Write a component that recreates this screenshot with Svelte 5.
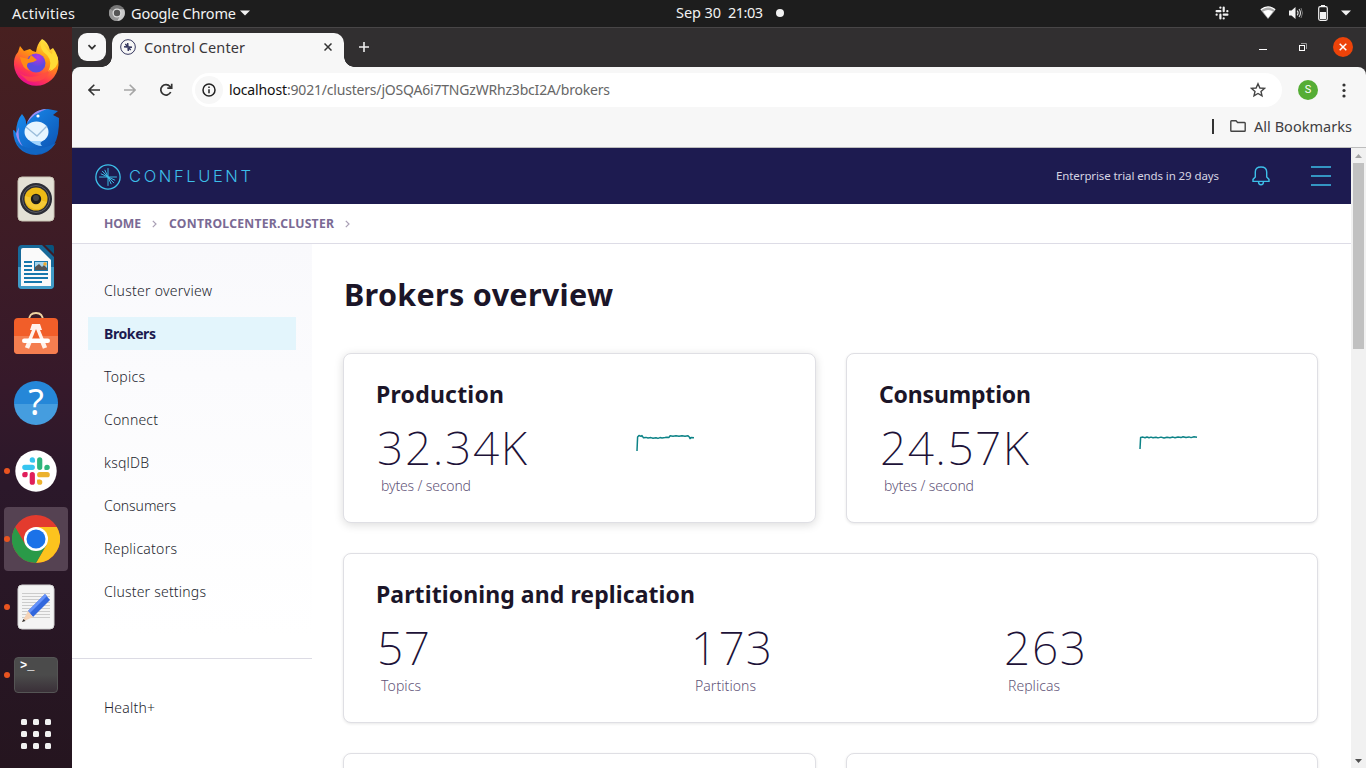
<script>
  // Spreads the letters so that a label takes its designed width.
  function fit(node, width) {
    const n = node.textContent.length;
    const natural = node.getBoundingClientRect().width;
    const gap = n > 1 ? (width - natural) / (n - 1) : 0;
    node.style.letterSpacing = `${gap}px`;
    node.style.marginRight = `${-gap}px`;
  }

  const nav = [
    ['Cluster overview', 108], ['Brokers', 52], ['Topics', 41], ['Connect', 54],
    ['ksqlDB', 45], ['Consumers', 72], ['Replicators', 73], ['Cluster settings', 102]
  ];
  const rates = [
    { title: 'Production', tw: 128, value: '32.34K', vw: 150,
      line: 'M1 17L1.6 3L3 1.5L5 2.4L6 1.6L7.5 3.8L10 3.4L12 4L15 3.6L17 4.3L20 3.7L22 4.4L24 3.6L26 4L29 3.6L31 3.2L33 3.4L34 1.8L37 2.2L40 1.7L43 2.3L46 1.7L49 2.2L52 1.7L53.5 3.2L54 4.6L55 3.6L58 3.8' },
    { title: 'Consumption', tw: 152, value: '24.57K', vw: 149,
      line: 'M1 15L1.6 3.6L4 3.1L6 3.8L8 3L10 3.7L12 3.1L14 3.8L17 3.2L19 3.9L22 3.1L25 4L28 3.2L31 3.8L34 3.1L36 3.7L39 3L42 3.6L44 2.8L47 3.5L50 2.9L52 3.6L55 2.8L58 3.3' }
  ];
  const counts = [['57', 53, 'Topics', 40], ['173', 81, 'Partitions', 61], ['263', 82, 'Replicas', 52]];
  const dots = [0, 12, 24];
  const rays = [
    'M12 12H3.8M12 12L5.4 9M12 12L6.5 6.4M12 12L9 5.4M12 12V3.8',
    'M12 12H20.2M12 12L18.6 15M12 12L17.5 17.6M12 12L15 18.6M12 12V20.2'
  ];
</script>

<div class="desktop">
  <header class="topbar">
    <span class="activities"><span use:fit={63}>Activities</span></span>
    <svg class="mini" width="16" height="16" viewBox="0 0 16 16"><circle cx="8" cy="8" r="8" fill="#777"/><path d="M8 4.3H15A8 8 0 0 1 8 16L11.3 10Z" fill="#c9c9c9"/><path d="M1 4A8 8 0 0 0 8 16L11 10Z" fill="#969696"/><circle cx="8" cy="8" r="4.5" fill="#ddd"/><circle cx="8" cy="8" r="3.2" fill="#555"/></svg>
    <span class="app"><span use:fit={105}>Google Chrome</span></span>
    <svg class="caret" width="10" height="6"><path d="M0 0.5H10L5 5.5Z" fill="#f2f2f2"/></svg>
    <span class="clock"><span use:fit={45}>Sep 30</span><span use:fit={35}>21:03</span><i></i></span>
    <span class="tray">
      <svg width="14" height="14" viewBox="0 0 14 14" stroke="#f2f2f2" stroke-width="2.200" stroke-linecap="round"><path d="M5.400 1.600V1.700M1.600 5.200H5.400M8.700 1.600V5.200M12.400 5.200H12.300M8.700 8.700H12.400M8.700 12.400V12.300M5.400 8.700V12.400M1.600 8.700H1.700"/></svg>
      <svg width="16" height="14" viewBox="0 0 16 14"><path d="M.8 4.2Q8 -2 15.2 4.2L8 13Z" fill="#aaa"/><path d="M3 5.6Q8 2.5 13 5.6L8 12Z" fill="#fff"/><path d="M.8 3.8Q8 -2 15.2 3.8" fill="none" stroke="#fff" stroke-width="1.4"/></svg>
      <svg width="16" height="14" viewBox="0 0 16 14"><path d="M1 4.5H3.5L7.5 1V13L3.5 9.5H1Z" fill="#f2f2f2"/><path d="M9.2 4.7Q11 7 9.2 9.3M11 3Q14 7 11 11" fill="none" stroke="#ddd" stroke-width="1.1"/><path d="M13 2Q16 7 13 12" fill="none" stroke="#777"/></svg>
      <svg width="10" height="16" viewBox="0 0 10 16"><path d="M3 0H7V2H3Z" fill="#f2f2f2"/><rect x=".7" y="1.7" width="8.6" height="13.6" rx="1.5" fill="none" stroke="#f2f2f2" stroke-width="1.2"/><path d="M2 7H8V14H2Z" fill="#f2f2f2"/></svg>
      <svg width="10" height="6"><path d="M0 .5H10L5 5.5Z" fill="#f2f2f2"/></svg>
    </span>
  </header>

  <div class="body">
    <nav class="dock">
      <div class="slot low">
        <svg width="48" height="52" viewBox="0 0 48 52">
          <defs>
            <linearGradient id="fx" x1=".8" y1="0" x2=".3" y2="1"><stop offset="0" stop-color="#fff44f"/><stop offset=".4" stop-color="#ff980e"/><stop offset=".75" stop-color="#ff3750"/><stop offset="1" stop-color="#e60895"/></linearGradient>
            <radialGradient id="fg" cx=".6" cy=".2"><stop offset="0" stop-color="#b833e1"/><stop offset="1" stop-color="#5b4be0"/></radialGradient>
          </defs>
          <path d="M30 1Q36 4 38 12L41 10Q47 18 46.500 27A22.300 22.300 0 0 1 2 27Q1.500 19 6 14L8 8L12 13L18 11Q21 14 24 14Q25 6 30 1Z" fill="url(#fx)"/>
          <path d="M29 2Q27 12 35 17Q41 24 36 34Q47 30 46 20Q43 14 41 11L40 16Q35 13 29 2Z" fill="#ffdb35"/>
          <circle cx="24" cy="25" r="9.500" fill="url(#fg)"/>
          <path d="M8 19L17 21L19 17L25 22Q21 25 16 25Q13 29 18 33Q10 31 8 19Z" fill="#ff8b16"/>
          <path d="M6 34Q20 45 39 31Q32 47 16 43Z" fill="#ff4d43" opacity=".7"/>
        </svg>
      </div>
      <div class="slot low">
        <svg width="50" height="48" viewBox="0 0 50 48">
          <defs><linearGradient id="tb" x1="0" y1="0" x2="1" y2="1"><stop offset="0" stop-color="#1b91f3"/><stop offset="1" stop-color="#0b4fae"/></linearGradient></defs>
          <path d="M11 6Q16 12 15 17Q21 1 37 1Q42 2 47 3L42 7L48 10Q49 46 25 47Q3 46 2 22Q4 22 5 25Q5 13 11 6Z" fill="url(#tb)"/>
          <path d="M8 19Q6 30 12 39Q6 33 5 26ZM16 15Q22 1 36 1Q23 5 16 15Z" fill="#9d8cf0"/>
          <path d="M5 34Q20 47 45 35Q37 47 23 46Q11 44 5 34Z" fill="#1166c4"/>
          <ellipse cx="25.500" cy="24" rx="12" ry="10.500" fill="#e7f5ff"/><path d="M19 33Q25 38 31 38Q28 35 31 33Z" fill="#9fd4ff"/>
          <path d="M15 19L26 28L36 18" fill="none" stroke="#9bbddb" stroke-width="1.300"/><circle cx="27" cy="8" r="1.600" fill="#fff"/>
        </svg>
      </div>
      <div class="slot">
        <svg width="38" height="46" viewBox="0 0 38 46"><rect x="1" y="1" width="36" height="44" rx="4" fill="#e4e1d6" stroke="#c9c4b5"/><circle cx="19" cy="23" r="16" fill="#2b2c35"/><circle cx="19" cy="23" r="13.500" fill="none" stroke="#5d5e66"/><circle cx="19" cy="23" r="11.500" fill="#edba16"/><path d="M8 20A11.500 11.500 0 0 0 30 26L19 23Z" fill="#f9d34d" opacity=".6"/><circle cx="19" cy="23" r="5.200" fill="#1c1c1c"/><circle cx="19" cy="22" r="3" fill="#444"/></svg>
      </div>
      <div class="slot">
        <svg width="38" height="46" viewBox="0 0 38 46"><path d="M5 1H25L37 13V41Q37 45 33 45H5Q1 45 1 41V5Q1 1 5 1Z" fill="#176999"/><path d="M1 23H37V41Q37 45 33 45H5Q1 45 1 41Z" fill="#409bc7"/><path d="M6 4H22L34 16V42H4V6Q4 4 6 4Z" fill="#fafafa"/><path d="M28 1H35Q37 1 37 4V10Z" fill="#08547e"/><path d="M7 18H15M7 22H15M7 26H15M7 30H31M7 34H31M7 38H25" stroke="#1678ad" stroke-width="2"/><rect x="17" y="17" width="14" height="10" fill="#1678ad"/><path d="M18 18H30V26H18Z" fill="#a5d5ed"/><path d="M18 26V23L22 20L25 23L27 21L30 24V26Z" fill="#555"/><circle cx="28" cy="20" r="1.700" fill="#efa92b"/></svg>
      </div>
      <div class="slot store">
        <svg width="46" height="48" viewBox="0 0 46 48"><path d="M16 12Q16 4 23 4Q30 4 30 12" fill="none" stroke="#efd4a2" stroke-width="1.800"/><rect x="1" y="9" width="44" height="36" rx="4" fill="#f15e29"/><path d="M1 27H45V41Q45 45 41 45H5Q1 45 1 41Z" fill="#f47e50"/><path d="M23 17L14 39M23 17L32 39" stroke="#fff2ec" stroke-width="4.500"/><path d="M19 15H27L29 21H17Z" fill="#fff2ec"/><path d="M23 20L19 30H27Z" fill="#f15e29"/><rect x="9" y="29.500" width="28" height="4.500" rx="2.200" fill="#fff"/></svg>
      </div>
      <div class="slot"><div class="help">?</div></div>
      <div class="slot run">
        <svg width="42" height="42" viewBox="0 0 42 42"><circle cx="21" cy="21" r="20.700" fill="#fff"/><g stroke-width="5.200" stroke-linecap="round"><path d="M17.300 9.800V10M9.800 17.300H17.300" stroke="#36c5f0"/><path d="M24.700 9.800V17.300M32.200 17.300H32" stroke="#2eb67d"/><path d="M24.700 24.700H32.200M24.700 32.200V32" stroke="#ecb22e"/><path d="M17.300 24.700V32.200M9.800 24.700H10" stroke="#e01e5a"/></g><path d="M17.300 9.800H19.900V12.400H17.300Z" fill="#36c5f0"/><path d="M29.600 17.300H32.200V19.900H29.600Z" fill="#2eb67d"/><path d="M22.100 29.600H24.700V32.200H22.100Z" fill="#ecb22e"/><path d="M9.800 22.100H12.400V24.700H9.800Z" fill="#e01e5a"/></svg>
      </div>
      <div class="slot run current">
        <svg width="48" height="48" viewBox="0 0 48 48"><circle cx="24" cy="24" r="24" fill="#e33b2e"/><path d="M24 12H44.800A24 24 0 0 1 24 48L34.400 30Z" fill="#fcc31e"/><path d="M3.200 12A24 24 0 0 0 24 48L34.400 30L24 36L13.600 30Z" fill="#2a9a48"/><circle cx="24" cy="24" r="12" fill="#fff"/><circle cx="24" cy="24" r="9.500" fill="#1b72e8"/></svg>
      </div>
      <div class="slot run">
        <svg width="38" height="46" viewBox="0 0 38 46"><rect x="1" y="1" width="36" height="44" rx="4" fill="#f4f4f4" stroke="#d4d4d4"/><path d="M5 9.500H33M5 12.500H33M5 15.500H33M5 18.500H33M5 21.500H33M5 24.500H33M5 27.500H33M5 30.500H33M5 33.500H33" stroke="#ccc"/><path d="M28 10L33 16L16 33L11 27Z" fill="#3267dd"/><path d="M28 10L30 12L13 29L11 27Z" fill="#6592fa"/><path d="M11 27L16 33L5 38Z" fill="#f4d3b7"/><path d="M6.500 35L8.500 37L5 38Z" fill="#333"/></svg>
      </div>
      <div class="slot run"><div class="term">&gt;_</div></div>
      <div class="slot apps">
        <svg width="30" height="30">{#each dots as y}{#each dots as x}<rect {x} {y} width="6" height="6" rx="1.500" fill="#f1f1f1"/>{/each}{/each}</svg>
      </div>
    </nav>

    <section class="window">
      <div class="tabs">
        <button class="tabsearch" aria-label="Search tabs"><svg width="10" height="7"><path d="M1.500 1.200L5 4.700L8.500 1.200" fill="none" stroke="#333" stroke-width="1.700"/></svg></button>
        <div class="tab">
          <svg width="16" height="16" viewBox="0 0 24 24" fill="none" stroke="#35375f"><circle cx="12" cy="12" r="11" stroke-width="1.500"/><path d="M6 11.500L12 12L8 7.500M12 12L11.500 6M18 12.500L12 12L16 16.500M12 12L12.500 18" stroke-width="2.200"/></svg>
          <span class="tabtitle"><span use:fit={101}>Control Center</span></span>
          <svg class="x" width="8" height="8"><path d="M.5 .5L7.500 7.500M7.500 .5L.5 7.500" stroke="#333" stroke-width="1.500"/></svg>
        </div>
        <svg class="plus" width="10" height="10"><path d="M5 0V10M0 5H10" stroke="#eee" stroke-width="1.600"/></svg>
        <div class="controls">
          <svg width="8" height="10"><path d="M0 7.500H8" stroke="#fff"/></svg>
          <svg width="8" height="8"><path d="M2 .5H7.500V6" fill="none" stroke="#999"/><rect x=".5" y="2.500" width="5" height="5" fill="none" stroke="#fff"/></svg>
          <i class="close"><svg width="8" height="8"><path d="M.7 .7L7.300 7.300M7.300 .7L.7 7.300" stroke="#fff" stroke-width="1.500"/></svg></i>
        </div>
      </div>

      <div class="toolbar">
        <svg width="12" height="12" fill="none" stroke="#333" stroke-width="1.600"><path d="M12 6H1M6.300 .7L1 6L6.300 11.300"/></svg>
        <svg width="12" height="12" fill="none" stroke="#a6a6a6" stroke-width="1.600"><path d="M0 6H11M5.700 .7L11 6L5.700 11.300"/></svg>
        <svg width="14" height="14" fill="none" stroke="#333" stroke-width="1.700"><path d="M11.700 9A5.200 5.200 0 1 1 11 3.500L12.500 5M12.700 .8V5.200H8.300"/></svg>
        <div class="omnibox">
          <i class="info"><svg width="14" height="14" fill="none" stroke="#222" stroke-width="1.500"><circle cx="7" cy="7" r="6"/><path d="M7 6.300V10.300M7 3.600V5.100"/></svg></i>
          <span class="url"><b use:fit={58}>localhost</b><span use:fit={323}>:9021/clusters/jOSQA6i7TNGzWRhz3bcI2A/brokers</span></span>
          <svg width="16" height="16"><path d="M8 1.800L9.900 6L14.400 6.400L11 9.400L12 13.900L8 11.500L4 13.900L5 9.400L1.600 6.400L6.100 6Z" fill="none" stroke="#444" stroke-width="1.400"/></svg>
        </div>
        <i class="avatar">S</i>
        <svg class="kebab" width="4" height="15" fill="#333"><circle cx="2" cy="2" r="1.600"/><circle cx="2" cy="7.500" r="1.600"/><circle cx="2" cy="13" r="1.600"/></svg>
      </div>
      <div class="bookmarks">
        <i></i>
        <svg width="16" height="12"><path d="M.8 1.500Q.8 .7 1.500 .7H6L7.600 2.500H14.500Q15.200 2.500 15.200 3.300V10.500Q15.200 11.300 14.500 11.300H1.500Q.8 11.300 .8 10.500Z" fill="none" stroke="#444" stroke-width="1.400"/></svg>
        <span use:fit={98}>All Bookmarks</span>
      </div>

      <div class="viewport">
        <div class="page">
          <div class="brandbar">
            <svg width="26" height="26" viewBox="0 0 24 24" fill="none" stroke="#3dbfe9"><circle cx="12" cy="12" r="11.200" stroke-width="1.200"/>{#each rays as d}<path {d} stroke-width=".9"/>{/each}</svg>
            <span class="wordmark"><span use:fit={122}>CONFLUENT</span></span>
            <span class="trial"><span use:fit={163}>Enterprise trial ends in 29 days</span></span>
            <svg class="bell" width="18" height="20" fill="none" stroke="#3dbfe9" stroke-width="1.400"><path d="M1 15.400V13.400L3.300 11V6Q3.300 1 9 1Q14.700 1 14.700 6V11L17 13.400V15.400ZM6.500 15.500Q6.500 18.800 9 18.800Q11.500 18.800 11.500 15.500"/></svg>
            <svg class="menu" width="20" height="20" stroke="#3dbfe9" stroke-width="1.300"><path d="M0 1H20M0 10H20M0 19H20"/></svg>
          </div>
          <div class="crumbs">
            <span use:fit={37}>HOME</span>
            <svg width="5" height="8"><path d="M.8 .8L4 4L.8 7.200" fill="none" stroke="#a99fb5" stroke-width="1.200"/></svg>
            <span use:fit={165}>CONTROLCENTER.CLUSTER</span>
            <svg width="5" height="8"><path d="M.8 .8L4 4L.8 7.200" fill="none" stroke="#a99fb5" stroke-width="1.200"/></svg>
          </div>
          <div class="columns">
            <aside>
              <ul>
                {#each nav as [label, width]}
                  <li class:active={label === 'Brokers'}><span use:fit={width}>{label}</span></li>
                {/each}
              </ul>
              <div class="health"><span use:fit={51}>Health+</span></div>
            </aside>
            <main>
              <h1><span use:fit={269}>Brokers overview</span></h1>
              <div class="grid">
                {#each rates as r, i}
                  <article class:raised={i === 0}>
                    <h2><span use:fit={r.tw}>{r.title}</span></h2>
                    <div class="rate">
                      <div>
                        <div class="value"><span use:fit={r.vw}>{r.value}</span></div>
                        <div class="unit"><span use:fit={90}>bytes / second</span></div>
                      </div>
                      <svg width="60" height="20"><path d={r.line} fill="none" stroke="#0d8387" stroke-width="1.500" stroke-linejoin="round"/></svg>
                    </div>
                  </article>
                {/each}
                <article class="wide">
                  <h2><span use:fit={319}>Partitioning and replication</span></h2>
                  <div class="counts">
                    {#each counts as [value, vw, label, lw]}
                      <div>
                        <div class="value"><span use:fit={vw}>{value}</span></div>
                        <div class="unit"><span use:fit={lw}>{label}</span></div>
                      </div>
                    {/each}
                  </div>
                </article>
                <article></article>
                <article></article>
              </div>
            </main>
          </div>
        </div>
        <div class="scroll"><svg width="15" height="15"><path d="M4 10L7.500 6L11 10Z" fill="#a3a3a3"/></svg><i></i><svg class="down" width="15" height="15"><path d="M4 6L7.500 10L11 6Z" fill="#505050"/></svg></div>
      </div>
    </section>
  </div>
</div>

<style>
  :global(body) { margin: 0; overflow: hidden; }
  * { box-sizing: border-box; }
  svg { display: block; flex: none; }
  span { white-space: nowrap; }
  i { font-style: normal; }
  span > span, h1 > span, h2 > span, b, .crumbs span, li span, .value span, .unit span, .health span { display: inline-block; }
  .desktop { width: 1366px; height: 768px; display: flex; flex-direction: column; overflow: hidden; font: 14.500px/20px "Noto Sans", "Open Sans", sans-serif; color: #231e2d; }
  .topbar { height: 27px; flex: none; background: #1d1d1d; color: #f2f2f2; display: flex; align-items: center; padding: 0 15px 1px 12px; position: relative; }
  .activities { width: 97px; }
  .app { width: 109px; margin-left: 6px; }
  .clock { position: absolute; left: 676px; top: 2px; display: flex; gap: 7px; align-items: center; }
  .clock i { width: 8px; height: 8px; border-radius: 50%; background: #f2f2f2; margin: 2px 0 0 6px; }
  .tray { margin-left: auto; display: flex; align-items: center; }
  .tray svg:nth-child(2) { margin-left: 31px; }
  .tray svg:nth-child(3) { margin-left: 12px; }
  .tray svg:nth-child(4) { margin-left: 14px; }
  .tray svg:nth-child(5) { margin-left: 13px; }
  .body { flex: 1; display: flex; min-height: 0; }
  .dock { width: 72px; background: linear-gradient(#482020, #36192a 48%, #2b182a 62%, #25151f); display: flex; flex-direction: column; gap: 4px; padding: 4px 4px 0; }
  .slot { height: 64px; flex: none; display: flex; align-items: center; justify-content: center; border-radius: 4px; position: relative; }
  .low { padding-top: 2px; }
  .store { padding-bottom: 5px; }
  .run::before { content: ""; position: absolute; left: 0; width: 6px; height: 6px; border-radius: 50%; background: #e95420; }
  .current { background: #554252; }
  .apps { margin-top: -9px; }
  .help { width: 44px; height: 44px; border-radius: 50%; background: linear-gradient(#2587d8 52%, #459ddf 52%); color: #fff; font: 36px/42px "Noto Sans", sans-serif; text-align: center; }
  .term { width: 44px; height: 36px; border-radius: 4px; background: linear-gradient(#4b4b4b 50%, #3a3038); border: 1px solid #555; color: #fff; font: bold 12px/16px "Liberation Mono", monospace; padding-left: 5px; }
  .window { flex: 1; min-width: 0; display: flex; flex-direction: column; background: #f7f7f7; }
  .tabs { height: 40px; flex: none; background: #312f30; border-top: 1px solid #484647; display: flex; align-items: center; padding: 0 13px 1px 6px; }
  .tabsearch { width: 28px; height: 28px; padding: 0; border: 0; border-radius: 9px; background: #f7f7f7; display: flex; align-items: center; justify-content: center; }
  .tab { align-self: flex-end; height: 34px; width: 232px; margin: 0 0 -1px 6px; border-radius: 10px 10px 0 0; background: #f7f7f7; display: flex; align-items: center; padding: 0 12px 7px 8px; position: relative; color: #39363a; }
  .tab::before, .tab::after { content: ""; position: absolute; bottom: 0; width: 10px; height: 10px; }
  .tab::before { right: 100%; background: radial-gradient(circle at 0 0, transparent 9.500px, #f7f7f7 10px); }
  .tab::after { left: 100%; background: radial-gradient(circle at 100% 0, transparent 9.500px, #f7f7f7 10px); }
  .tabtitle { margin-left: 8px; }
  .x { margin-left: auto; }
  .plus { margin-left: 15px; }
  .controls { margin-left: auto; display: flex; align-items: center; gap: 32px; }
  .controls svg + svg { margin-right: -6px; }
  .close { width: 20px; height: 20px; border-radius: 50%; background: #ed4309; display: flex; align-items: center; justify-content: center; }
  .window { background: #312f30; }
  .toolbar { height: 46px; flex: none; display: flex; align-items: center; padding: 0 20px 0 16px; background: #f7f7f7; border-radius: 8px 8px 0 0; }
  .toolbar > svg:nth-child(2) { margin-left: 24px; }
  .toolbar > svg:nth-child(3) { margin-left: 23px; }
  .omnibox { flex: none; width: 1090px; height: 34px; margin-left: 19px; border-radius: 17px; background: #fff; display: flex; align-items: center; padding: 0 16px 0 3px; }
  .info { width: 28px; height: 28px; border-radius: 50%; background: #f7f7f7; display: flex; align-items: center; justify-content: center; }
  .url { flex: 1; margin-left: 6px; color: #666; font-size: 14px; }
  .url b { font-weight: 400; color: #111; }
  .avatar { width: 20px; height: 20px; margin-left: 16px; border-radius: 50%; background: #55ad35; color: #fff; font: 11px/20px Roboto, sans-serif; text-align: center; }
  .kebab { margin-left: auto; }
  .bookmarks { height: 35px; flex: none; background: #f7f7f7; border-bottom: 1px solid #bdbdbd; display: flex; align-items: center; justify-content: flex-end; padding: 0 14px 8px 0; color: #403d42; }
  .bookmarks i { width: 2px; height: 15px; background: #333; margin-right: 16px; }
  .bookmarks svg { margin-right: 8px; }
  .viewport { flex: 1; min-height: 0; display: flex; background: #fff; }
  .page { width: 1279px; display: flex; flex-direction: column; overflow: hidden; }
  .brandbar { height: 56px; flex: none; background: #1d1b50; display: flex; align-items: center; padding: 0 20px 0 23px; }
  .brandbar > svg:first-child { margin: 1px 0 0; }
  .wordmark { margin-left: 8px; font: 300 16.500px/24px Inter, sans-serif; color: #3dbfe9; }
  .trial { margin-left: auto; font-size: 11.500px; color: #d6d4e2; }
  .bell { margin-left: 33px; }
  .menu { margin-left: 41px; }
  .crumbs { height: 40px; flex: none; border-bottom: 1px solid #dddce6; display: flex; align-items: center; padding-left: 32px; color: #7a6a94; font-size: 12.200px; font-weight: 700; }
  .crumbs svg { margin: 0 12px 0 11px; }
  .columns { flex: 1; display: flex; min-height: 0; }
  aside { width: 240px; flex: none; background: linear-gradient(#f9f9fc, #fff 75%); font-weight: 350; font-size: 14px; }
  ul { height: 415px; margin: 0; padding: 30px 16px 0; list-style: none; display: flex; flex-direction: column; gap: 10px; border-bottom: 1px solid #dcdbe4; }
  li { height: 33px; line-height: 33px; padding-left: 16px; }
  .active { background: #e3f5fc; color: #1c1a4f; font-weight: 700; }
  .health { padding: 39px 0 0 32px; }
  main { flex: 1; padding: 30px 33px 0 31px; }
  h1, h2 { margin: 0; color: #1b1528; font-weight: 700; }
  h1 { font-size: 30.500px; line-height: 40px; padding-left: 1px; height: 79px; }
  .grid { display: grid; grid-template-columns: 473px 472px; grid-auto-rows: 170px; gap: 30px; }
  article { border: 1px solid #dfdfe4; border-radius: 8px; padding: 23px 32px; box-shadow: 0 1px 3px #00000018; background: #fff; }
  .raised { box-shadow: 0 2px 10px #00000024; }
  .wide { grid-column: span 2; }
  h2 { font-size: 23px; line-height: 34px; height: 35px; }
  .rate, .counts { display: grid; grid-template-columns: 260px 1fr; }
  .rate svg { margin-top: 22px; }
  .counts { grid-template-columns: 314px 313px 1fr; }
  .value { height: 63px; padding: 10px 0 0 1px; line-height: 50px; font-size: 46px; font-weight: 200; color: #1d1238; }
  .unit { font-weight: 300; font-size: 14px; color: #5f5478; padding-left: 5px; line-height: 22px; }
  .scroll { width: 15px; background: #f1f1f1; display: flex; flex-direction: column; align-items: center; }
  .scroll i { width: 11px; height: 186px; background: #c1c1c1; }
  .down { margin-top: auto; }
</style>
